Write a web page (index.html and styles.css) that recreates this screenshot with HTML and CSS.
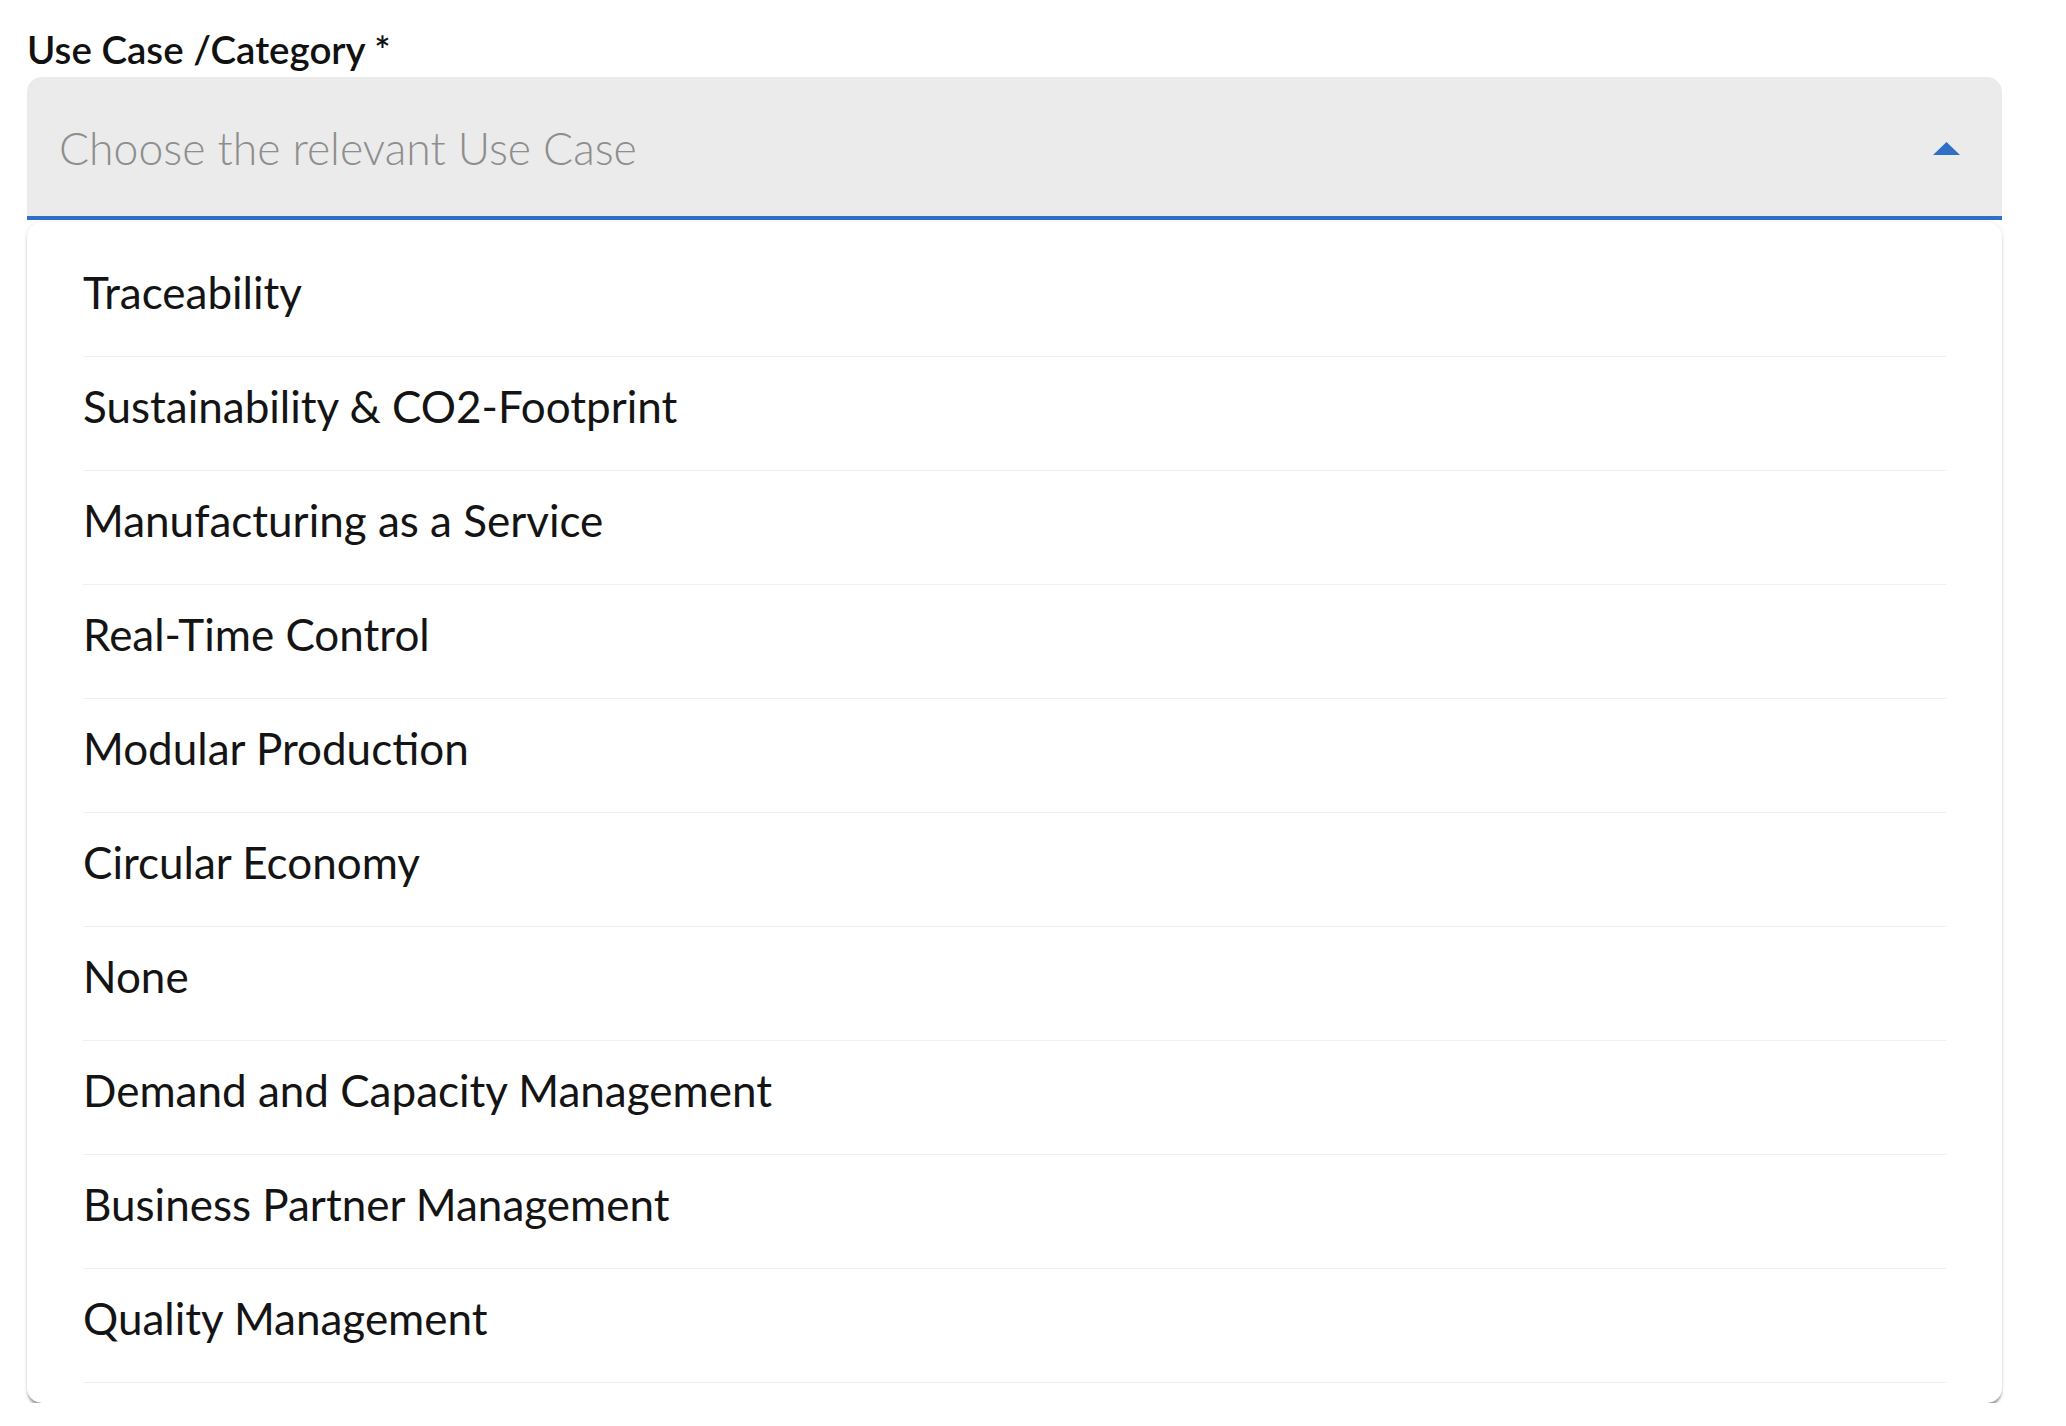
FILE: index.html
```html
<!DOCTYPE html>
<html lang="en">
<head>
<meta charset="utf-8">
<title>Use Case / Category</title>
<link rel="stylesheet" href="styles.css">
</head>
<body>
<div class="page">
  <label class="field-label">Use Case /Category *</label>
  <div class="select">
    <span class="placeholder">Choose the relevant Use Case</span>
    <svg class="arrow" width="27" height="13" viewBox="0 0 27 13"><polygon points="0,13 13.5,0 27,13" fill="#2f6fc6"/></svg>
  </div>
  <ul class="menu">
    <li class="item">Traceability</li>
    <li class="item">Sustainability &amp; CO2-Footprint</li>
    <li class="item">Manufacturing as a Service</li>
    <li class="item">Real-Time Control</li>
    <li class="item">Modular Production</li>
    <li class="item">Circular Economy</li>
    <li class="item">None</li>
    <li class="item">Demand and Capacity Management</li>
    <li class="item">Business Partner Management</li>
    <li class="item">Quality Management</li>
  </ul>
</div>
</body>
</html>
```
FILE: styles.css
```css
html, body {
  margin: 0;
  padding: 0;
  background: #ffffff;
}
.page {
  padding: 26px 64px 0 27px;
  font-family: Lato, "Liberation Sans", sans-serif;
  color: #111111;
}
.field-label {
  display: block;
  font-size: 38.5px;
  line-height: 46px;
  font-weight: 600;
  margin-bottom: 5px;
}
.select {
  height: 139px;
  background: #ebebeb;
  border-radius: 15px 15px 0 0;
  border-bottom: 4px solid #2f6fc6;
  display: flex;
  align-items: center;
  justify-content: space-between;
  padding: 0 42px 0 32px;
}
.placeholder {
  font-size: 44.5px;
  font-weight: 300;
  color: #8e8e8e;
  margin-top: 2px;
}
.arrow {
  display: block;
  margin-top: 3px;
}
.menu {
  list-style: none;
  margin: 2px 0 0 0;
  padding: 21px 0 20px 0;
  background: #ffffff;
  border-radius: 15px;
  box-shadow: 0 4px 3px -1px rgba(0,0,0,0.38), 0 0 4px rgba(0,0,0,0.10);
}
.item {
  margin: 0 56px;
  height: 114px;
  padding-bottom: 16px;
  box-sizing: border-box;
  border-bottom: 1px solid #efefef;
  display: flex;
  align-items: center;
  font-size: 44px;
  font-weight: 400;
  color: #141414;
}
```
